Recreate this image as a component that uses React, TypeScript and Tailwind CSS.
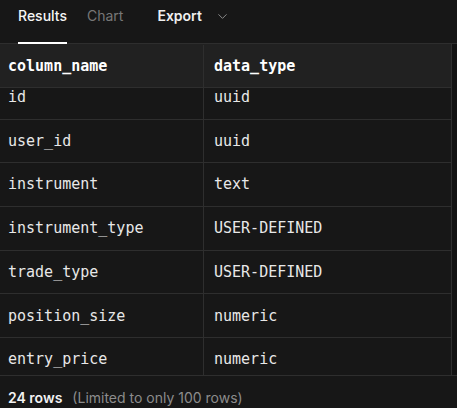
import React, { useEffect, useRef } from 'react';
import { ChevronDown } from 'lucide-react';

const rows: [string, string][] = [
  ['id', 'uuid'],
  ['user_id', 'uuid'],
  ['instrument', 'text'],
  ['instrument_type', 'USER-DEFINED'],
  ['trade_type', 'USER-DEFINED'],
  ['position_size', 'numeric'],
  ['entry_price', 'numeric'],
  ['exit_price', 'numeric'],
  ['stop_loss', 'numeric'],
];

const mono = { fontFamily: '"DejaVu Sans Mono", "Liberation Mono", monospace' };

export default function App() {
  const scrollRef = useRef<HTMLDivElement>(null);

  useEffect(() => {
    if (scrollRef.current) scrollRef.current.scrollTop = 12;
  }, []);

  return (
    <div
      className="flex h-[408px] w-[457px] flex-col overflow-hidden bg-[#171717] text-[#ededed]"
      style={{ fontFamily: 'Inter, "Noto Sans", sans-serif' }}
    >
      {/* tabs */}
      <div className="flex h-[44px] shrink-0 items-stretch border-b border-[#2e2e2e] pl-[18px] text-[14px] leading-[20px]">
        <div className="relative pt-[6px] font-medium text-[#f5f5f5]">
          Results
          <span className="absolute bottom-[-1px] left-0 right-0 h-[2px] bg-white" />
        </div>
        <div className="ml-[20px] pt-[6px] text-[#777777]">Chart</div>
        <div className="ml-[34px] flex items-start gap-[13px] pt-[6px] font-semibold text-[#f0f0f0]">
          Export
          <ChevronDown className="mt-[3px] h-[15px] w-[15px] text-[#8a8a8a]" strokeWidth={1.6} />
        </div>
      </div>

      {/* table */}
      <div className="flex h-[331px] shrink-0">
        <div
          ref={scrollRef}
          className="h-full w-[452px] overflow-hidden border-r border-[#2e2e2e] text-[15px]"
          style={mono}
        >
          <div className="sticky top-0 z-10 flex h-[44px] border-b border-[#2e2e2e] bg-[#212121] pt-[1px] font-bold text-white">
            <div className="flex w-[204px] items-center border-r border-[#2e2e2e] pl-[8px]">column_name</div>
            <div className="flex flex-1 items-center pl-[10px]">data_type</div>
          </div>
          {rows.map(([name, type]) => (
            <div key={name} className="flex h-[43.7px] border-b border-[#2e2e2e] text-[#e8e8e8]">
              <div className="flex w-[204px] items-center border-r border-[#2e2e2e] pl-[8px]">{name}</div>
              <div className="flex flex-1 items-center pl-[10px]">{type}</div>
            </div>
          ))}
        </div>
        <div className="flex-1 bg-[#121212]" />
      </div>

      {/* footer */}
      <div className="flex h-[44px] shrink-0 items-center gap-[10px] border-t border-[#2e2e2e] pl-[8px] text-[14px]">
        <span className="font-semibold text-[#f2f2f2]">24 rows</span>
        <span className="text-[#8c8c8c]">(Limited to only 100 rows)</span>
      </div>
    </div>
  );
}
